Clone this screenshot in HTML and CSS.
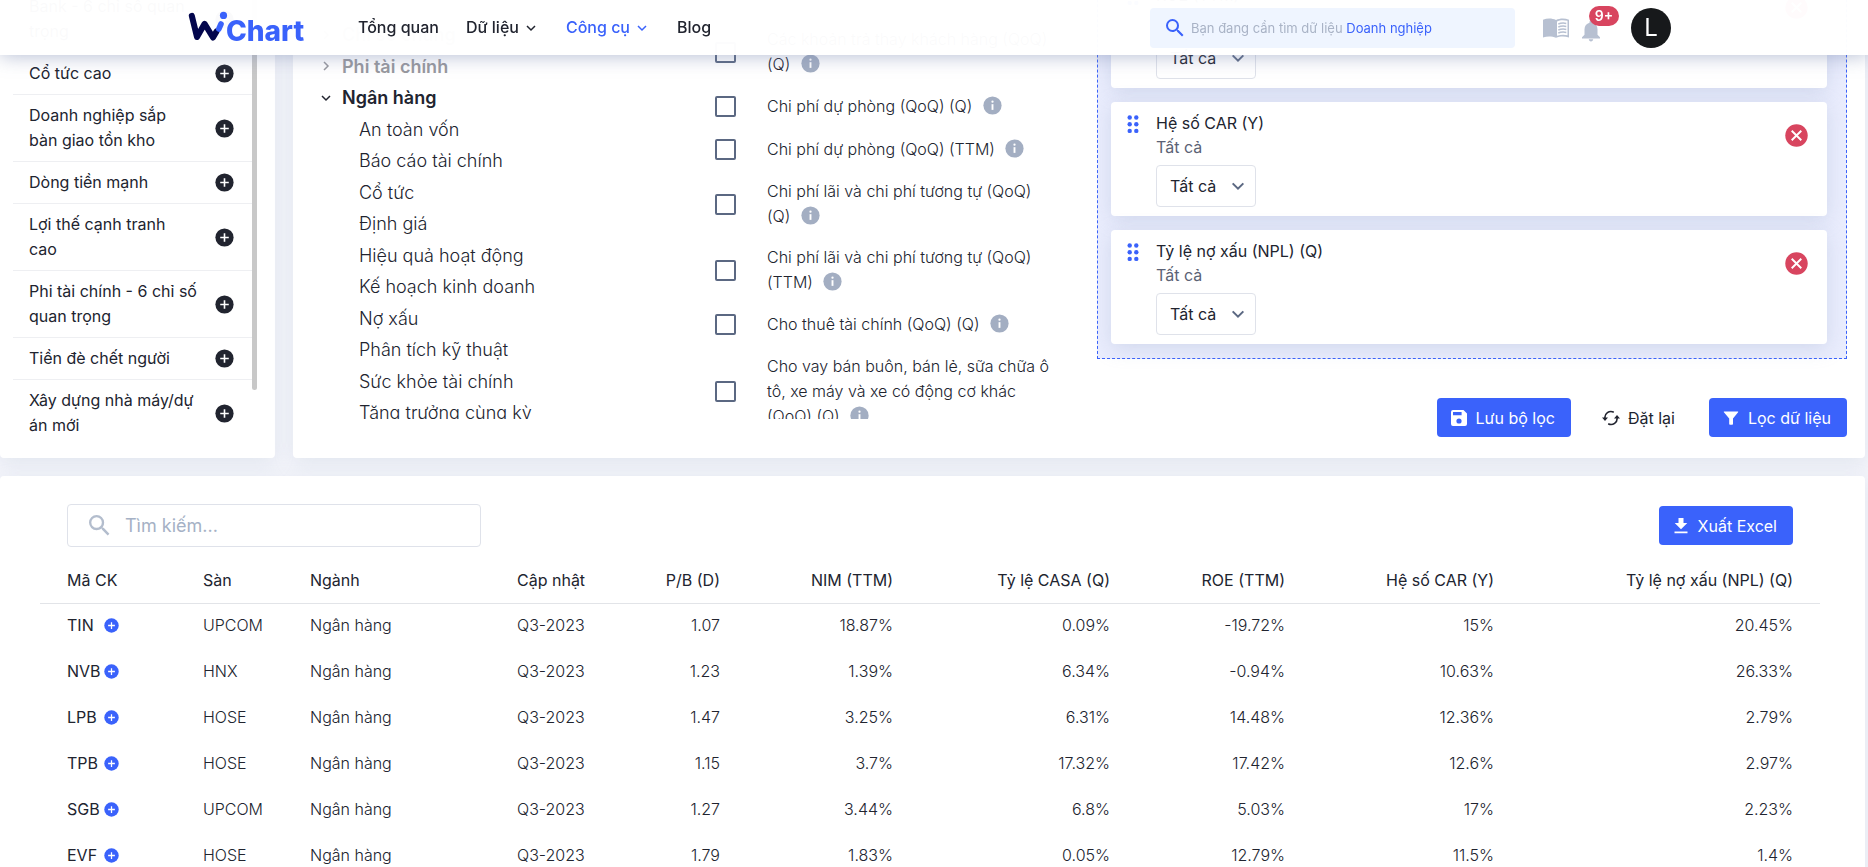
FILE: index.html
```html
<!DOCTYPE html>
<html lang="vi">
<head>
<meta charset="utf-8">
<title>WiChart - Bộ lọc cổ phiếu</title>
<link rel="stylesheet" href="styles.css">
</head>
<body>
<svg class="sprite" aria-hidden="true">
  <symbol id="i-plus" viewBox="0 0 20 20"><circle cx="10" cy="10" r="9.6" fill="currentColor"/><path d="M10 5.5v9M5.5 10h9" stroke="#fff" stroke-width="1.7"/></symbol>
  <symbol id="i-info" viewBox="0 0 20 20"><circle cx="10" cy="10" r="9.6" fill="#a3aec2"/><path d="M10 8.6v6" stroke="#fff" stroke-width="2"/><circle cx="10" cy="6" r="1.2" fill="#fff"/></symbol>
  <symbol id="i-close" viewBox="0 0 24 24"><circle cx="12" cy="12" r="11.7" fill="#d8455f"/><path d="M7 7l10 10M17 7L7 17" stroke="#fff" stroke-width="2"/></symbol>
  <symbol id="i-down" viewBox="0 0 12 12"><path d="M2 4l4 4 4-4" fill="none" stroke="currentColor" stroke-width="1.5"/></symbol>
  <symbol id="i-search" viewBox="0 0 18 18"><path d="M12.6 11h-.7l-.3-.3A6 6 0 0 0 13 6.500a6.500 6.500 0 1 0-6.500 6.500c1.600 0 3-.6 4.200-1.500l.3.300v.7l5 5 1.500-1.500zM6.500 11a4.500 4.500 0 1 1 0-9 4.500 4.500 0 0 1 0 9z" fill="currentColor"/></symbol>
  <symbol id="i-dots" viewBox="0 0 12 19"><g fill="#3a62fb"><circle cx="2.700" cy="2.500" r="2.200"/><circle cx="9.300" cy="2.500" r="2.200"/><circle cx="2.700" cy="9.200" r="2.200"/><circle cx="9.300" cy="9.200" r="2.200"/><circle cx="2.700" cy="15.900" r="2.200"/><circle cx="9.300" cy="15.900" r="2.200"/></g></symbol>
</svg>

<header class="topbar">
  <a class="logo" href="#" aria-label="WiChart">
    <svg width="128" height="48" viewBox="0 0 128 48">
      <path d="M7.800 11.800L13 33 20.600 19.800 29 33.500 32.500 27.500" fill="none" stroke="#03064d" stroke-width="6" stroke-linecap="round" stroke-linejoin="round"/>
      <path d="M34.800 25l2.200-5" stroke="#3a62fb" stroke-width="5.600" stroke-linecap="round"/>
      <circle cx="39.500" cy="11.400" r="3.600" fill="#3a62fb"/>
      <text class="logo-text" x="42" y="37">Chart</text>
    </svg>
  </a>
  <nav class="nav">
    <a href="#">Tổng quan</a>
    <a href="#">Dữ liệu <svg width="12" height="12"><use href="#i-down"/></svg></a>
    <a href="#" class="active">Công cụ <svg width="12" height="12"><use href="#i-down"/></svg></a>
    <a href="#">Blog</a>
  </nav>
  <button class="quick-search" type="button">
    <svg width="18" height="18"><use href="#i-search"/></svg>
    <span>Bạn đang cần tìm dữ liệu <b>Doanh nghiệp</b></span>
  </button>
  <div class="tools">
    <button class="tool" type="button" aria-label="Hướng dẫn">
      <svg width="26" height="20" viewBox="0 0 26 20"><path d="M0 1.800C4 0 9 0 13 2c4-2 9-2 13-.2V19.500c-4-1.500-9-1.500-13 .3-4-1.800-9-1.800-13-.3z" fill="#b7c0d1"/><path d="M14 3.400c3-1.500 7-1.600 10.500-.6v14.400c-3.500-.8-7-.7-10.500.6z" fill="#fff"/><path d="M15.300 6c2.500-1 5.300-1.100 8-.6M15.300 9c2.500-1 5.300-1.100 8-.6M15.300 12c2.500-1 5.300-1.100 8-.6M15.300 15c2.500-1 5.300-1.100 8-.6" fill="none" stroke="#b7c0d1" stroke-width="1.500"/></svg>
    </button>
    <button class="tool bell" type="button" aria-label="Thông báo">
      <svg width="20" height="22" viewBox="0 0 20 22"><path d="M10 .5c.9 0 1.500.6 1.500 1.500v.7c3 .8 5 3.300 5 6.500v5.500l2.500 2.500v1.200H1v-1.200l2.500-2.500V9.200c0-3.200 2-5.700 5-6.500V2C8.500 1.100 9.100.5 10 .5zM7.800 19.300h4.400c0 1.200-1 2.200-2.200 2.200s-2.200-1-2.200-2.200z" fill="#b7c0d1"/></svg>
      <span class="badge">9+</span>
    </button>
    <button class="avatar" type="button">L</button>
  </div>
</header>

<main>
  <div class="filters">
    <section class="panel presets">
      <ul class="preset-list">
        <li><span>Bank - 6 chỉ số quan trọng</span><button type="button" aria-label="Thêm"><svg width="19" height="19"><use href="#i-plus"/></svg></button></li>
        <li><span>Cổ tức cao</span><button type="button" aria-label="Thêm"><svg width="19" height="19"><use href="#i-plus"/></svg></button></li>
        <li><span>Doanh nghiệp sắp bàn giao tồn kho</span><button type="button" aria-label="Thêm"><svg width="19" height="19"><use href="#i-plus"/></svg></button></li>
        <li><span>Dòng tiền mạnh</span><button type="button" aria-label="Thêm"><svg width="19" height="19"><use href="#i-plus"/></svg></button></li>
        <li><span>Lợi thế cạnh tranh<br>cao</span><button type="button" aria-label="Thêm"><svg width="19" height="19"><use href="#i-plus"/></svg></button></li>
        <li><span>Phi tài chính - 6 chỉ số quan trọng</span><button type="button" aria-label="Thêm"><svg width="19" height="19"><use href="#i-plus"/></svg></button></li>
        <li><span>Tiền đè chết người</span><button type="button" aria-label="Thêm"><svg width="19" height="19"><use href="#i-plus"/></svg></button></li>
        <li><span>Xây dựng nhà máy/dự án mới</span><button type="button" aria-label="Thêm"><svg width="19" height="19"><use href="#i-plus"/></svg></button></li>
      </ul>
      <div class="thumb"></div>
    </section>

    <section class="panel criteria">
      <div class="scroller tree">
        <div class="group muted"><svg width="12" height="12" class="right"><use href="#i-down"/></svg>Chỉ số chung</div>
        <div class="group muted"><svg width="12" height="12" class="right"><use href="#i-down"/></svg>Phi tài chính</div>
        <div class="group"><svg width="12" height="12"><use href="#i-down"/></svg>Ngân hàng</div>
        <ul>
          <li>An toàn vốn</li><li>Báo cáo tài chính</li><li>Cổ tức</li><li>Định giá</li><li>Hiệu quả hoạt động</li><li>Kế hoạch kinh doanh</li><li>Nợ xấu</li><li>Phân tích kỹ thuật</li><li>Sức khỏe tài chính</li><li>Tăng trưởng cùng kỳ</li>
        </ul>
      </div>

      <div class="scroller checks">
        <label><input type="checkbox"><span>Các khoản trả thay khách hàng (QoQ) (Q) <svg width="19" height="19"><use href="#i-info"/></svg></span></label>
        <label><input type="checkbox"><span>Chi phí dự phòng (QoQ) (Q) <svg width="19" height="19"><use href="#i-info"/></svg></span></label>
        <label><input type="checkbox"><span>Chi phí dự phòng (QoQ) (TTM) <svg width="19" height="19"><use href="#i-info"/></svg></span></label>
        <label><input type="checkbox"><span>Chi phí lãi và chi phí tương tự (QoQ) (Q) <svg width="19" height="19"><use href="#i-info"/></svg></span></label>
        <label><input type="checkbox"><span>Chi phí lãi và chi phí tương tự (QoQ) (TTM) <svg width="19" height="19"><use href="#i-info"/></svg></span></label>
        <label><input type="checkbox"><span>Cho thuê tài chính (QoQ) (Q) <svg width="19" height="19"><use href="#i-info"/></svg></span></label>
        <label><input type="checkbox"><span>Cho vay bán buôn, bán lẻ, sữa chữa ô tô, xe máy và xe có động cơ khác (QoQ) (Q) <svg width="19" height="19"><use href="#i-info"/></svg></span></label>
      </div>

      <div class="selected">
        <div class="dropzone">
          <article class="card">
            <svg width="12" height="19"><use href="#i-dots"/></svg>
            <div class="card-body"><h3>ROE (TTM)</h3><p>Tất cả</p>
              <div class="pick"><select aria-label="ROE (TTM)"><option>Tất cả</option></select><svg width="16" height="16"><use href="#i-down"/></svg></div></div>
            <button type="button" aria-label="Xóa"><svg width="23" height="23"><use href="#i-close"/></svg></button>
          </article>
          <article class="card">
            <svg width="12" height="19"><use href="#i-dots"/></svg>
            <div class="card-body"><h3>Hệ số CAR (Y)</h3><p>Tất cả</p>
              <div class="pick"><select aria-label="Hệ số CAR (Y)"><option>Tất cả</option></select><svg width="16" height="16"><use href="#i-down"/></svg></div></div>
            <button type="button" aria-label="Xóa"><svg width="23" height="23"><use href="#i-close"/></svg></button>
          </article>
          <article class="card">
            <svg width="12" height="19"><use href="#i-dots"/></svg>
            <div class="card-body"><h3>Tỷ lệ nợ xấu (NPL) (Q)</h3><p>Tất cả</p>
              <div class="pick"><select aria-label="Tỷ lệ nợ xấu (NPL) (Q)"><option>Tất cả</option></select><svg width="16" height="16"><use href="#i-down"/></svg></div></div>
            <button type="button" aria-label="Xóa"><svg width="23" height="23"><use href="#i-close"/></svg></button>
          </article>
        </div>
        <div class="actions">
          <button class="btn" type="button"><svg width="16" height="16" viewBox="0 0 16 16"><path d="M2 0h10.500L16 3.500V14a2 2 0 0 1-2 2H2a2 2 0 0 1-2-2V2a2 2 0 0 1 2-2zM2 2v3.200h8.600V2zM8 8.400a2.600 2.600 0 1 0 0 5.200 2.600 2.600 0 0 0 0-5.200z" fill="#fff" fill-rule="evenodd"/></svg>Lưu bộ lọc</button>
          <button class="btn plain" type="button"><svg width="18" height="16" viewBox="0 0 18 16"><g fill="none" stroke="#21242f" stroke-width="1.600"><path d="M3 8.600A6 6 0 0 1 11.800 2.300"/><path d="M15 7.400A6 6 0 0 1 6.200 13.700"/></g><path d="M0 7.600h6L3 11zM12 8.400h6L15 5z" fill="#21242f"/></svg>Đặt lại</button>
          <button class="btn" type="button"><svg width="16" height="16" viewBox="0 0 16 16"><path d="M1.300 1.400h13.400c.5 0 .7.5.4.900L10 8.500V14c0 .5-.4.800-.8.800H7c-.5 0-.8-.3-.8-.8V8.500L.9 2.300c-.3-.4-.1-.9.400-.9z" fill="#fff"/></svg>Lọc dữ liệu</button>
        </div>
      </div>
    </section>
  </div>

  <section class="panel results">
    <div class="results-bar">
      <label class="search"><svg width="21" height="21"><use href="#i-search"/></svg><input type="text" placeholder="Tìm kiếm..." aria-label="Tìm kiếm"></label>
      <button class="btn" type="button"><svg width="16" height="16" viewBox="0 0 16 16"><path d="M5.500 0h5v5h3.800L8 11.300 1.700 5h3.800zM1.500 13.600h13v1.700h-13z" fill="#fff"/></svg>Xuất Excel</button>
    </div>
    <table>
      <thead>
        <tr><th class="c1">Mã CK</th><th class="c2">Sàn</th><th class="c3">Ngành</th><th class="c4">Cập nhật</th><th class="c5">P/B (D)</th><th class="c6">NIM (TTM)</th><th class="c7">Tỷ lệ CASA (Q)</th><th class="c8">ROE (TTM)</th><th class="c9">Hệ số CAR (Y)</th><th class="c10">Tỷ lệ nợ xấu (NPL) (Q)</th></tr>
      </thead>
      <tbody>
        <tr><td><div class="code"><span>TIN</span><button type="button" aria-label="Thêm TIN"><svg width="15" height="15"><use href="#i-plus"/></svg></button></div></td><td>UPCOM</td><td>Ngân hàng</td><td>Q3-2023</td><td>1.07</td><td>18.87%</td><td>0.09%</td><td>-19.72%</td><td>15%</td><td>20.45%</td></tr>
        <tr><td><div class="code"><span>NVB</span><button type="button" aria-label="Thêm NVB"><svg width="15" height="15"><use href="#i-plus"/></svg></button></div></td><td>HNX</td><td>Ngân hàng</td><td>Q3-2023</td><td>1.23</td><td>1.39%</td><td>6.34%</td><td>-0.94%</td><td>10.63%</td><td>26.33%</td></tr>
        <tr><td><div class="code"><span>LPB</span><button type="button" aria-label="Thêm LPB"><svg width="15" height="15"><use href="#i-plus"/></svg></button></div></td><td>HOSE</td><td>Ngân hàng</td><td>Q3-2023</td><td>1.47</td><td>3.25%</td><td>6.31%</td><td>14.48%</td><td>12.36%</td><td>2.79%</td></tr>
        <tr><td><div class="code"><span>TPB</span><button type="button" aria-label="Thêm TPB"><svg width="15" height="15"><use href="#i-plus"/></svg></button></div></td><td>HOSE</td><td>Ngân hàng</td><td>Q3-2023</td><td>1.15</td><td>3.7%</td><td>17.32%</td><td>17.42%</td><td>12.6%</td><td>2.97%</td></tr>
        <tr><td><div class="code"><span>SGB</span><button type="button" aria-label="Thêm SGB"><svg width="15" height="15"><use href="#i-plus"/></svg></button></div></td><td>UPCOM</td><td>Ngân hàng</td><td>Q3-2023</td><td>1.27</td><td>3.44%</td><td>6.8%</td><td>5.03%</td><td>17%</td><td>2.23%</td></tr>
        <tr><td><div class="code"><span>EVF</span><button type="button" aria-label="Thêm EVF"><svg width="15" height="15"><use href="#i-plus"/></svg></button></div></td><td>HOSE</td><td>Ngân hàng</td><td>Q3-2023</td><td>1.79</td><td>1.83%</td><td>0.05%</td><td>12.79%</td><td>11.5%</td><td>1.4%</td></tr>
      </tbody>
    </table>
  </section>
</main>
</body>
</html>
```
FILE: styles.css
```css
* { box-sizing: border-box; }
html { scrollbar-width: none; }
body {
  margin: 0;
  background: #f3f4fa;
  color: #21242f;
  font: 400 16px/24px Inter, "Noto Sans", sans-serif;
}
button, input, select { font: inherit; color: inherit; }
button { border: 0; padding: 0; background: none; cursor: pointer; }
ul { margin: 0; padding: 0; list-style: none; }
h3, p { margin: 0; font-size: 16px; font-weight: 400; }
svg { flex: none; }
.sprite { position: absolute; width: 0; height: 0; }

/* Top bar */
.topbar {
  position: fixed;
  z-index: 5;
  top: 0;
  left: 0;
  right: 0;
  display: flex;
  align-items: center;
  height: 55px;
  padding: 0 197px 0 184px;
  background: rgba(255, 255, 255, 0.98);
  box-shadow: 0 0 20px rgba(120, 135, 175, 0.6);
}
.logo { display: flex; }
.logo-text { font: 800 28px Inter, sans-serif; fill: #3a62fb; }
.nav { display: flex; gap: 27px; margin-left: 46px; padding-bottom: 2px; font-weight: 500; }
.nav a { display: flex; align-items: center; gap: 6px; color: inherit; text-decoration: none; }
.nav a svg { margin: 2px 2px 0 0; }
.nav .active { color: #3a62fb; }
.quick-search {
  display: flex;
  align-items: center;
  gap: 7px;
  width: 365px;
  height: 40px;
  margin-left: auto;
  padding: 0 16px;
  border-radius: 4px;
  background: #eff5ff;
  color: #a9b3c6;
  font-size: 13px;
}
.quick-search svg, .quick-search b { color: #3a62fb; font-weight: 400; }
.tools { display: flex; align-items: center; margin-left: 28px; }
.tool { display: flex; }
.bell { position: relative; margin: 6px 30px 0 12px; }
.badge {
  position: absolute;
  left: 8px;
  top: -14px;
  width: 30px;
  border-radius: 10px;
  background: #d8455f;
  color: #fff;
  font-size: 14px;
  font-weight: 600;
  line-height: 20px;
}
.avatar {
  width: 40px;
  height: 40px;
  border-radius: 50%;
  background: #17191b;
  color: #fff;
  font-size: 24px;
}

/* Panels */
main { display: grid; gap: 18px; margin-right: 3px; }
.filters { display: grid; grid-template-columns: 275px minmax(0, 1fr); gap: 18px; }
.panel {
  border-radius: 4px;
  background: #fff;
  box-shadow: 0 6px 20px rgba(160, 178, 200, 0.2);
}
.presets { display: flex; align-items: flex-start; padding: 0 18px 10px 13px; }
.preset-list { flex: 1; margin-top: -14px; }
.preset-list li {
  display: flex;
  align-items: center;
  justify-content: space-between;
  padding: 8px 18px 8px 16px;
  border-bottom: 1px solid #eeeff2;
  line-height: 25px;
}
.preset-list li:last-child { border-bottom: 0; }
.preset-list span { max-width: 170px; }
.preset-list button { display: flex; }
.thumb { width: 5px; height: 390px; border-radius: 0 0 3px 3px; background: #c8c8c8; }

.criteria {
  display: grid;
  grid-template-columns: 395px 382px minmax(0, 1fr);
  padding: 0 18px 0 27px;
}
.scroller { height: 419px; overflow: hidden; }
.tree { padding-top: 19px; font-size: 18px; line-height: 1.75; font-weight: 300; }
.group { display: flex; align-items: center; gap: 10px; font-weight: 600; }
.group.muted { color: #97989e; }
.group svg { color: #21242f; }
.group .right { transform: rotate(-90deg); color: #97989e; }
.tree li { padding-left: 39px; }

.checks { padding-top: 19px; font-weight: 300; line-height: 25px; }
.checks label { display: flex; align-items: center; gap: 31px; min-height: 43px; padding: 8px 0; }
.checks span { width: 286px; }
.checks span svg { margin-left: 6px; vertical-align: -3px; display: inline-block; }
.checks input {
  flex: none;
  appearance: none;
  width: 21px;
  height: 21px;
  margin: 0;
  border: 2px solid #5b6882;
  border-radius: 2px;
}

.dropzone {
  display: grid;
  gap: 14px;
  margin-top: -41px;
  padding: 14px 19px 14px 13px;
  border: 1px dashed #3a62fb;
  background: #eaedfd;
}
.card {
  display: flex;
  align-items: flex-start;
  padding: 9px 19px 9px 16px;
  border-radius: 4px;
  background: #fff;
  box-shadow: 0 4px 20px rgba(150, 165, 200, 0.3);
}
.card > svg { margin-top: 4px; }
.card-body { flex: 1; margin-left: 17px; }
.card-body p { color: #5b6275; }
.card > button { display: flex; margin-top: 13px; }
.pick { position: relative; width: 100px; margin-top: 6px; }
.pick select {
  appearance: none;
  display: block;
  width: 100%;
  height: 42px;
  padding: 0 13px;
  border: 1px solid #dfe2ea;
  border-radius: 4px;
  background: #fff;
}
.pick svg { position: absolute; right: 10px; top: 13px; color: #5b6882; pointer-events: none; }

.actions { display: flex; justify-content: flex-end; margin: 39px 0 21px; }
.btn {
  display: flex;
  align-items: center;
  gap: 9px;
  height: 39px;
  padding: 0 16px 0 14px;
  border-radius: 4px;
  background: #3a62fb;
  color: #fff;
}
.btn.plain { padding: 0 34px 0 31px; gap: 8px; background: none; color: inherit; }

/* Results */
.results { padding: 28px 45px 0 40px; }
.results-bar { display: flex; align-items: center; justify-content: space-between; padding: 0 27px; }
.search {
  display: flex;
  align-items: center;
  gap: 15px;
  width: 414px;
  height: 43px;
  padding: 0 21px;
  border: 1px solid #dfe2ea;
  border-radius: 4px;
  color: #b3bdcd;
}
.search input { flex: 1; min-width: 0; padding: 0; border: 0; outline: 0; font-size: 18px; color: #21242f; }
.search input::placeholder { color: #a5b1c5; opacity: 1; }
table { width: 100%; margin-top: 10px; border-collapse: collapse; table-layout: fixed; }
th, td { height: 46px; padding: 0 27px; text-align: right; font-weight: 400; white-space: nowrap; }
th { border-bottom: 1px solid #e2e4e8; }
td { padding-bottom: 2px; font-weight: 300; }
th:nth-child(-n+4), td:nth-child(-n+4) { text-align: left; }
.c1 { width: 136px; }
.c2 { width: 107px; }
.c3 { width: 207px; }
.c4 { width: 122px; }
.c5 { width: 135px; }
.c6 { width: 173px; }
.c7 { width: 217px; }
.c8 { width: 175px; }
.c9 { width: 209px; }
.c10 { width: 299px; }
.code { display: flex; align-items: center; width: 52px; justify-content: space-between; font-weight: 400; }
.code button { display: flex; color: #3a62fb; }
```
